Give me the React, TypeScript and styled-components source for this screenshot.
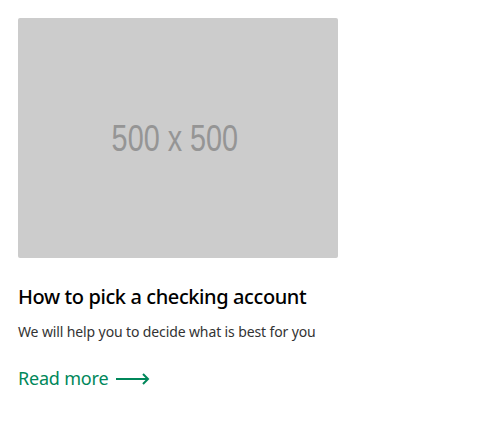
import React from "react";
import styled, { createGlobalStyle } from "styled-components";

const Global = createGlobalStyle`
  html, body { margin: 0; padding: 0; background: #fff; }
  body { font-family: "Noto Sans", sans-serif; }
`;

const Card = styled.article`
  width: 320px;
  padding: 18px;
  display: flex;
  flex-direction: column;
  align-items: flex-start;
`;

const Placeholder = styled.div`
  width: 320px;
  height: 240px;
  background: #cccccc;
  border-radius: 2px;
  display: flex;
  align-items: center;
  justify-content: center;
  overflow: hidden;
`;

const PlaceholderLabel = styled.span`
  display: inline-block;
  color: #959595;
  font-family: "Liberation Sans", Arial, sans-serif;
  font-size: 36px;
  line-height: 1;
  transform: scaleX(0.8) translate(-4px, 1px);
`;

const Title = styled.h3`
  margin: 26px 0 0;
  font-family: "Noto Sans", sans-serif;
  font-weight: 500;
  font-size: 20px;
  line-height: 26px;
  letter-spacing: -0.4px;
  color: #000;
`;

const Desc = styled.p`
  margin: 12px 0 0;
  font-size: 14px;
  line-height: 20px;
  letter-spacing: -0.12px;
  color: #333;
`;

const Link = styled.a`
  margin-top: 24px;
  display: inline-flex;
  align-items: center;
  gap: 8px;
  color: #00875a;
  font-size: 18px;
  line-height: 24px;
  letter-spacing: -0.2px;
  text-decoration: none;
`;

const Arrow = styled.svg`
  display: block;
  margin-top: 1px;
`;

export default function App() {
  return (
    <>
      <Global />
      <Card>
        <Placeholder>
          <PlaceholderLabel>500 x 500</PlaceholderLabel>
        </Placeholder>
        <Title>How to pick a checking account</Title>
        <Desc>We will help you to decide what is best for you</Desc>
        <Link href="#">
          Read more
          <Arrow width="34" height="12" viewBox="0 0 34 12" fill="none" stroke="currentColor" strokeWidth="2">
            <path d="M0 6h32M27 1l5 5-5 5" />
          </Arrow>
        </Link>
      </Card>
    </>
  );
}
